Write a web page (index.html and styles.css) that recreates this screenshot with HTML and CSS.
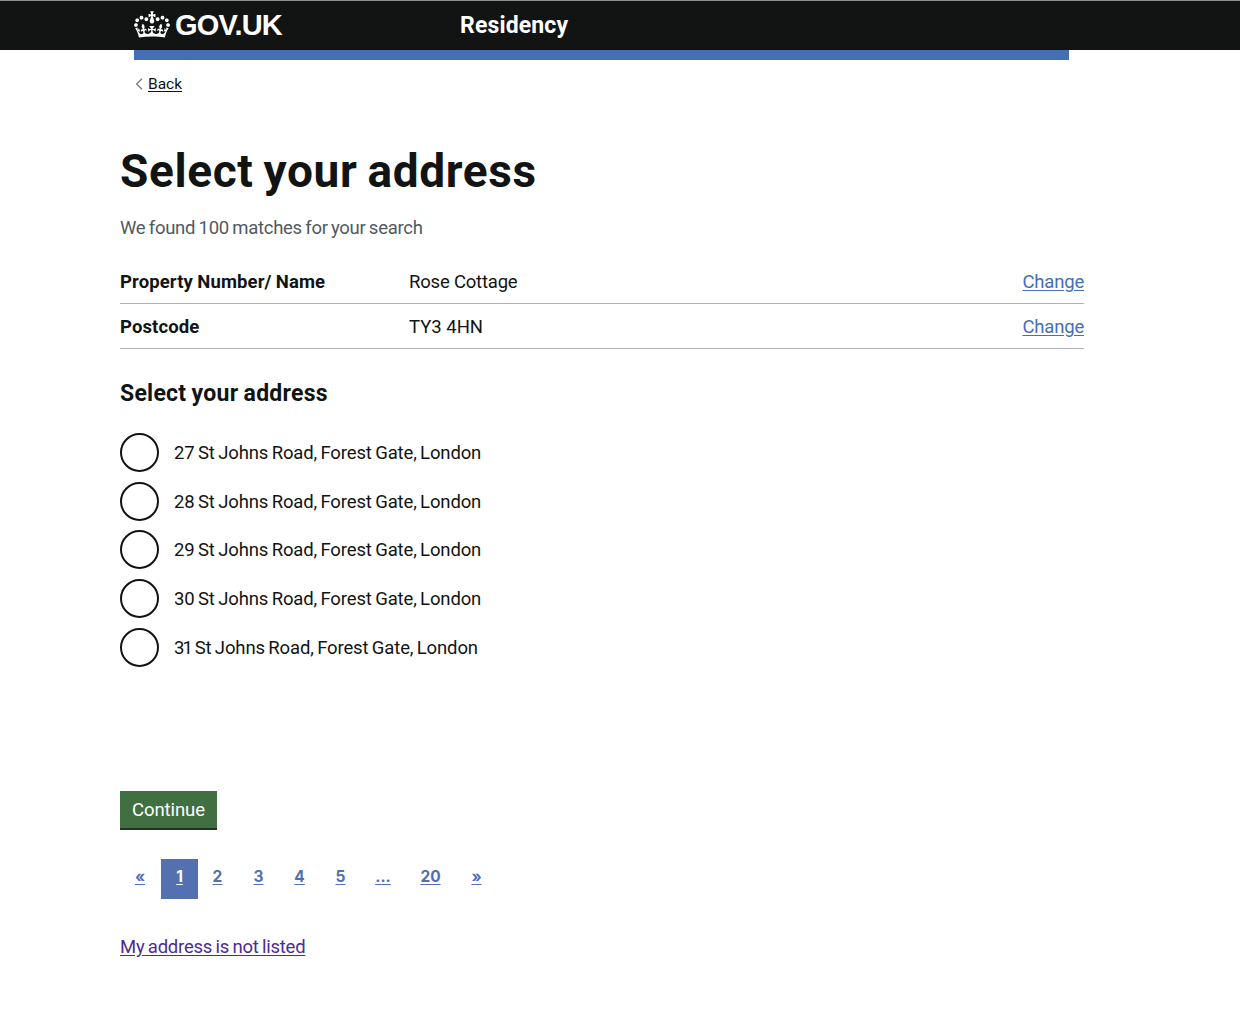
FILE: index.html
```html
<!DOCTYPE html>
<html lang="en">
<head>
<meta charset="utf-8">
<title>Select your address - Residency - GOV.UK</title>
<link rel="stylesheet" href="styles.css">
</head>
<body>
<header class="header">
  <div class="header-inner">
    <a class="logo" href="#">
      <svg class="crown" viewBox="0 0 132 97" aria-hidden="true"><path fill="currentColor" fill-rule="evenodd" d="M25 30.2c3.5 1.5 7.7-.2 9.1-3.7 1.5-3.6-.2-7.8-3.9-9.2-3.6-1.4-7.6.3-9.1 3.9-1.4 3.5.3 7.5 3.9 9zM9 39.5c3.6 1.5 7.8-.2 9.2-3.7 1.5-3.6-.2-7.8-3.9-9.1-3.6-1.5-7.6.2-9.1 3.8-1.4 3.5.3 7.5 3.8 9zM4.4 57.2c3.5 1.5 7.7-.2 9.1-3.8 1.5-3.6-.2-7.7-3.9-9.1-3.5-1.5-7.6.3-9.1 3.8-1.4 3.5.3 7.6 3.9 9.1zm38.3-21.4c3.5 1.5 7.7-.2 9.1-3.8 1.5-3.6-.2-7.7-3.9-9.1-3.6-1.5-7.6.3-9.1 3.8-1.3 3.6.4 7.7 3.9 9.1zm64.4-5.6c-3.6 1.5-7.8-.2-9.1-3.7-1.5-3.6.2-7.8 3.8-9.2 3.6-1.4 7.7.3 9.2 3.9 1.3 3.5-.4 7.5-3.9 9zm15.9 9.3c-3.6 1.5-7.7-.2-9.1-3.7-1.5-3.6.2-7.8 3.7-9.1 3.6-1.5 7.7.2 9.2 3.8 1.5 3.5-.3 7.5-3.8 9zm4.7 17.7c-3.6 1.5-7.8-.2-9.2-3.8-1.5-3.6.2-7.7 3.9-9.1 3.6-1.5 7.7.3 9.2 3.8 1.3 3.5-.4 7.6-3.9 9.1zM89.3 35.8c-3.6 1.5-7.8-.2-9.2-3.8-1.4-3.6.2-7.7 3.9-9.1 3.6-1.5 7.7.3 9.2 3.8 1.4 3.6-.3 7.7-3.9 9.1zM69.7 17.7l8.9 4.7V9.3l-8.9 2.8c-.2-.3-.5-.6-.9-.9L72.4 0H59.6l3.5 11.2c-.3.3-.6.5-.9.9l-8.8-2.8v13.1l8.8-4.7c.3.3.6.7.9.9l-5 15.4v.1c-.2.8-.4 1.6-.4 2.4 0 4.1 3.1 7.5 7 8.1h.2c.3 0 .7.1 1 .1.4 0 .7 0 1-.1h.2c4-.6 7.1-4.1 7.1-8.1 0-.8-.1-1.7-.4-2.4V34l-5.1-15.4c.4-.2.7-.6 1-.9zM66 92.8c16.9 0 32.8 1.1 47.1 3.2 4-16.9 8.9-26.7 14-33.5l-9.6-3.4c1 4.9 1.1 7.2 0 10.2-1.5-1.4-3-4.3-4.2-8.7L108.6 76c2.8-2 5-3.2 7.5-3.3-4.4 9.4-10 11.9-13.6 11.2-4.3-.8-6.3-4.6-5.6-7.9 1-4.7 5.7-5.9 8-.5 4.3-8.7-3-11.4-7.6-8.8 7.1-7.2 7.9-13.5 2.1-21.1-8 6.1-8.1 12.3-4.5 20.8-4.7-5.4-12.1-2.5-9.5 6.2 3.4-5.2 7.9-2 7.2 3.1-.6 4.3-6.4 7.8-13.5 7.2-10.3-.9-10.9-8-11.2-13.8 2.5-.5 7.1 1.8 11 7.3L80.2 60c-4.1 4.4-8 5.3-12.3 5.4 1.4-4.4 8-11.6 8-11.6H55.5s6.4 7.2 7.9 11.6c-4.2-.1-8-1-12.3-5.4l1.4 16.4c3.9-5.5 8.5-7.7 10.9-7.3-.3 5.8-.9 12.8-11.1 13.8-7.2.6-12.9-2.9-13.5-7.2-.7-5 3.8-8.3 7.1-3.1 2.7-8.7-4.6-11.6-9.4-6.2 3.7-8.5 3.6-14.7-4.6-20.8-5.8 7.6-5 13.9 2.2 21.1-4.7-2.6-11.9.1-7.7 8.8 2.3-5.5 7.1-4.2 8.1.5.7 3.3-1.3 7.1-5.7 7.9-3.5.7-9-1.8-13.5-11.2 2.5.1 4.7 1.3 7.5 3.3l-4.7-15.4c-1.2 4.4-2.7 7.2-4.3 8.7-1.1-3-.9-5.3 0-10.2l-9.5 3.4c5 6.9 9.9 16.7 14 33.5 14.8-2.1 30.8-3.2 47.7-3.2z"/></svg>
      <span class="logotype">GOV.UK</span>
    </a>
    <a class="service" href="#">Residency</a>
  </div>
</header>
<div class="bar"></div>
<nav class="back-nav">
  <svg class="chevron" viewBox="0 0 8 12" aria-hidden="true"><path d="M7 .8 1.6 6 7 11.2" fill="none" stroke="#6f777b" stroke-width="1.2"/></svg>
  <a class="back" href="#">Back</a>
</nav>
<main class="main">
  <h1 class="title">Select your address</h1>
  <p class="hint">We found 100 matches for your search</p>
  <dl class="summary">
    <div class="summary-row">
      <dt>Property Number/ Name</dt>
      <dd class="value">Rose Cottage</dd>
      <dd class="action"><a href="#">Change</a></dd>
    </div>
    <div class="summary-row">
      <dt>Postcode</dt>
      <dd>TY3 4HN</dd>
      <dd class="action"><a href="#">Change</a></dd>
    </div>
  </dl>
  <h2 class="subtitle">Select your address</h2>
  <div class="radios">
    <label class="radio"><input type="radio" name="address"><span>27 St Johns Road, Forest Gate, London</span></label>
    <label class="radio"><input type="radio" name="address"><span>28 St Johns Road, Forest Gate, London</span></label>
    <label class="radio"><input type="radio" name="address"><span>29 St Johns Road, Forest Gate, London</span></label>
    <label class="radio"><input type="radio" name="address"><span>30 St Johns Road, Forest Gate, London</span></label>
    <label class="radio"><input type="radio" name="address"><span><span class="narrow">31</span> St Johns Road, Forest Gate, London</span></label>
  </div>
  <button class="button" type="button">Continue</button>
  <nav class="pages">
    <a class="page previous" href="#">«</a>
    <a class="page current" href="#">1</a>
    <a class="page" href="#">2</a>
    <a class="page" href="#">3</a>
    <a class="page" href="#">4</a>
    <a class="page" href="#">5</a>
    <a class="page dots" href="#">...</a>
    <a class="page wide" href="#">20</a>
    <a class="page" href="#">»</a>
  </nav>
  <a class="not-listed" href="#">My address is not listed</a>
</main>
</body>
</html>
```
FILE: styles.css
```css
* { box-sizing: border-box; }
body {
  margin: 0;
  background: #fff;
  color: #111413;
  font: 18.5px/24px Roboto, "Liberation Sans", sans-serif;
}
h1, h2, p, dl, dd { margin: 0; }
.header {
  height: 50px;
  background: #111413;
  border-top: 1px solid #8e908f;
}
.header-inner { display: flex; width: 935px; margin-left: 134px; }
.header a { color: #fff; text-decoration: none; font-weight: 700; }
.logo { display: flex; width: 326px; padding-top: 10px; }
.crown { width: 36px; height: 27px; }
.logotype {
  margin-left: 5px;
  font: 700 29px/29px "Liberation Sans", Arial, sans-serif;
  letter-spacing: -.8px;
}
.header .service { padding-top: 13px; font-size: 23px; letter-spacing: .15px; }
.bar { width: 935px; height: 10px; margin-left: 134px; background: #456fb5; }
.back-nav {
  display: flex;
  align-items: center;
  height: 24px;
  margin: 12px 0 0 135px;
  font-size: 15.5px;
}
.chevron { width: 8px; height: 12px; margin-right: 5px; }
.back { color: inherit; text-underline-offset: 2px; }
.main { width: 964px; margin: 49px 0 0 120px; }
.title {
  font-size: 46px;
  line-height: 52px;
  font-weight: 700;
  letter-spacing: .62px;
  word-spacing: -2px;
}
.hint {
  margin-top: 19px;
  color: #505a5f;
  letter-spacing: -.27px;
  word-spacing: -1px;
}
.summary { margin-top: 19px; }
.summary-row {
  display: flex;
  height: 45px;
  padding-top: 11px;
  border-bottom: 1px solid #b1b4b6;
}
.summary dt { width: 289px; font-weight: 700; letter-spacing: .12px; word-spacing: -.5px; }
.value { letter-spacing: -.2px; }
.action { margin-left: auto; letter-spacing: -.2px; }
.action a { color: #456fb5; text-underline-offset: 2px; }
.subtitle {
  margin-top: 30px;
  font-size: 23px;
  line-height: 30px;
  font-weight: 700;
  letter-spacing: .25px;
  word-spacing: -.7px;
}
.radios { display: grid; gap: 9.7px; margin-top: 24px; }
.radio {
  display: flex;
  align-items: center;
  gap: 15px;
  height: 39px;
  letter-spacing: -.14px;
  word-spacing: -1px;
}
.radio > span { padding-top: 1px; }
.narrow { letter-spacing: -1.8px; }
.radio input {
  appearance: none;
  width: 39px;
  height: 39px;
  margin: 0;
  border: 2px solid #111413;
  border-radius: 50%;
}
.button {
  display: block;
  width: 97px;
  height: 39px;
  margin-top: 124px;
  padding: 2px 0 0;
  border: 0;
  border-bottom: 2px solid #20331f;
  background: #407042;
  color: #fff;
  font: inherit;
  letter-spacing: -.1px;
}
.pages { display: flex; gap: 4px; margin-top: 29px; }
.page {
  width: 37px;
  height: 40px;
  padding-top: 6px;
  color: #5370b0;
  font: 700 15.5px/24px Inter, sans-serif;
  text-align: center;
  text-underline-offset: 2px;
}
.previous { padding-left: 3px; }
.current { margin-right: -3px; background: #5370b0; color: #fff; }
.dots { width: 40px; }
.wide { width: 47px; }
.not-listed {
  display: inline-block;
  margin-top: 36px;
  color: #4c2c92;
  letter-spacing: -.23px;
  word-spacing: -1px;
  text-underline-offset: 2px;
}
```
